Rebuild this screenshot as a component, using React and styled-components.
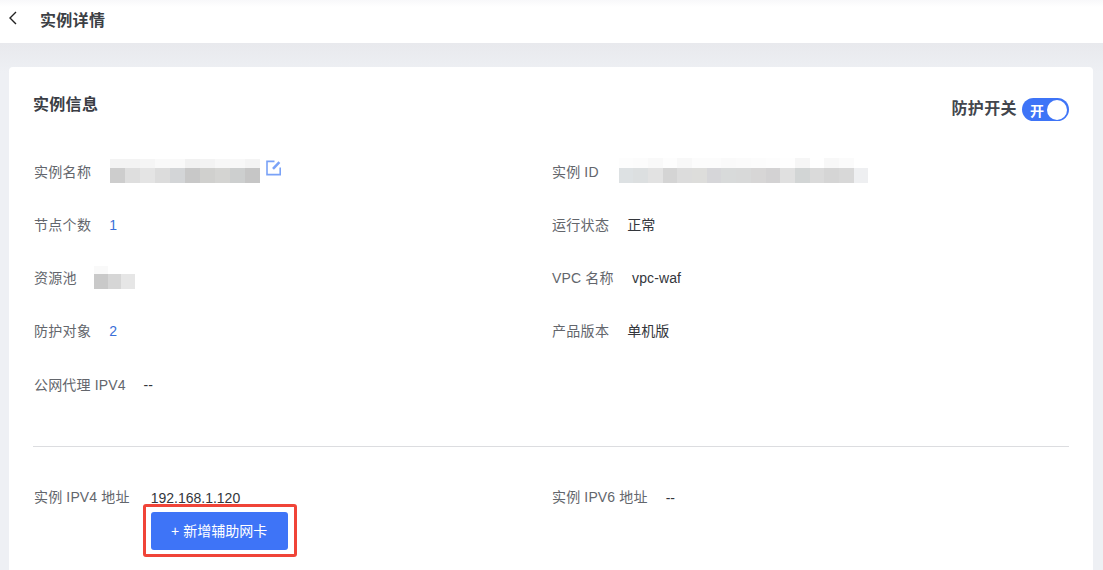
import React from "react";
import styled, { createGlobalStyle } from "styled-components";

const Global = createGlobalStyle`
  html, body { margin: 0; padding: 0; height: 570px; overflow: hidden; background: #eceef3; }
  body { font-family: "Liberation Sans", "Noto Sans CJK SC", sans-serif; font-size: 14px; color: #333; }
  * { box-sizing: border-box; }
`;
const Page = styled.div`display: flex; flex-direction: column; height: 570px; overflow: hidden;`;
const Header = styled.header`
  height: 43px; flex: none; display: flex; align-items: center; padding: 0 0 2px 8px; gap: 22px;
  background: linear-gradient(#f8f8fa 0, #fff 7px);
`;
const Back = styled.svg`width: 10px; height: 14px; flex: none; margin-top: -6px;`;
const PageTitle = styled.h1`margin: 0; font-size: 16px; letter-spacing: .3px; font-weight: 700; color: #3c3f45; line-height: 20px;`;
const Body = styled.main`flex: 1; padding: 24px 10px 0 9px; background: linear-gradient(#e8e9ed, #eef0f4 30px);`;
const Card = styled.section`background: #fff; border-radius: 4px; height: 520px; padding: 0 24px;`;
const CardHead = styled.div`display: flex; justify-content: space-between; align-items: flex-start; height: 77px; padding-top: 28px;`;
const CardTitle = styled.h2`margin: 0; font-size: 16px; letter-spacing: .3px; font-weight: 700; color: #3a3d44; line-height: 20px;`;
const Guard = styled.div`display: flex; align-items: center; gap: 5px; margin-top: 3px;`;
const GuardLabel = styled.span`font-size: 16px; letter-spacing: .4px; font-weight: 700; color: #43464d; line-height: 20px; margin-bottom: 2px;`;
const Switch = styled.span`
  width: 47px; height: 23px; border-radius: 12px; background: #3e74f7; display: flex; align-items: center;
  justify-content: space-between; padding: 0 2px 0 8px; color: #fff; font-size: 14px; font-weight: 700;
`;
const Knob = styled.i`width: 20px; height: 20px; border-radius: 50%; background: #fff; display: block;`;
const Grid = styled.div`display: grid; grid-template-columns: 518px 1fr; grid-auto-rows: 53.25px; padding-left: 1px;`;
const Field = styled.div`display: flex; align-items: center; height: 100%;`;
const Label = styled.span`color: #63666c; letter-spacing: ${p => p.$tight ? ".15px" : ".3px"}; margin-right: ${p => p.$gap || 18}px; white-space: nowrap;`;
const Value = styled.span`
  color: ${p => p.$link ? "#3a6fd8" : "#33363b"}; white-space: nowrap;
  padding-top: ${p => p.$latin ? 2 : 0}px; letter-spacing: ${p => p.$latin ? ".1px" : "0"};
`;
const Mosaic = styled.div`display: flex; flex-direction: column; margin-top: ${p => p.$top || 0}px;`;
const MosaicRow = styled.div`display: flex; height: ${p => p.$h}px;`;
const Pixel = styled.i`display: block; width: ${p => p.$w || 15}px; background: ${p => p.$c};`;
const EditIcon = styled.svg`width: 16px; height: 16px; margin: -5px 0 0 6px; flex: none;`;
const Divider = styled.hr`border: 0; height: 1px; background: #dcdde0; margin: 36px 0 0 0;`;
const Lower = styled.div`display: grid; grid-template-columns: 518px 1fr; padding: 39px 0 0 1px;`;
const LowerField = styled.div`display: flex; align-items: flex-start;`;
const LowerLabel = styled(Label)`line-height: 22px;`;
const Stack = styled.div`display: flex; flex-direction: column; align-items: flex-start;`;
const LowerValue = styled(Value)`line-height: 22px; padding-top: 0; margin-top: 1px;`;
const Mark = styled.div`
  border: 3px solid #f04438; border-radius: 3px; padding: 5px 6px 4px 5px; margin: -5px 0 0 -8px; background: #fff;
`;
const Add = styled.button`
  display: block; width: 137px; height: 38px; border: 0; border-radius: 3px; background: #3e74f7; color: #fff;
  font: inherit; font-size: 14px; padding: 0 0 2px;
`;

const px = (s) => s.split(" ").map((c) => "#" + c);
const name1 = px("f3f3f3 f3f3f3 f5f5f5 f9f9f9 f9f9f9 f1f1f1 f3f3f3 f7f7f7 f8f8f8 f4f4f4");
const name2 = px("cdcdcd dedede e4e4e4 dcdcdc d3d5d7 c8c8c8 d0d0ce d4d4d2 cdcfcf c6c6c6");
const id1 = px("fdfdfd fcfcfc f9f9f9 fdfdfd f8f8f8 fcfcfc fcfcfc fafafa fbfbfb fcfcfc fdfdfd fefefe f6f6f6 ffffff f8f8f8 fbfbfb");
const id2 = px("dde1e3 dcdfe0 e2e2e2 d4d4d4 dcdcdc dddddb d6d6d9 d8dada d8d9d9 d7d6d6 d3d2d3 e0e0e0 d2d5d5 dadada d5d5d5 d8d8d8 eeeff1");

const MosaicBlock = ({ top, bottom, w, h1, h2, mt }) => (
  <Mosaic $top={mt}>
    <MosaicRow $h={h1}>{top.map((c, i) => <Pixel key={i} $c={c} $w={w} />)}</MosaicRow>
    <MosaicRow $h={h2}>{bottom.map((c, i) => <Pixel key={i} $c={c} $w={w} />)}</MosaicRow>
  </Mosaic>
);

export default function App() {
  return (
    <Page>
      <Global />
      <Header>
        <Back viewBox="0 0 10 14" fill="none" stroke="#222" strokeWidth="1.4">
          <path d="M8 1 2 7l6 6" />
        </Back>
        <PageTitle>实例详情</PageTitle>
      </Header>
      <Body>
        <Card>
          <CardHead>
            <CardTitle>实例信息</CardTitle>
            <Guard>
              <GuardLabel>防护开关</GuardLabel>
              <Switch>开<Knob /></Switch>
            </Guard>
          </CardHead>
          <Grid>
            <Field>
              <Label $gap={19}>实例名称</Label>
              <MosaicBlock top={name1} bottom={name2} h1={9} h2={15} mt={1} />
              <EditIcon viewBox="0 0 16 16" fill="none" stroke="#7aa2f7">
                <path d="M8.5 1.4H1v13.2h13.2V7.6" strokeWidth="1.6" />
                <path d="M7 8.9 13.4 2.2" strokeWidth="2.6" />
              </EditIcon>
            </Field>
            <Field>
              <Label $tight $gap={20}>实例 ID</Label>
              <MosaicBlock top={id1} bottom={id2} w={14.7} h1={10} h2={15} />
            </Field>
            <Field><Label>节点个数</Label><Value $link $latin>1</Value></Field>
            <Field><Label>运行状态</Label><Value>正常</Value></Field>
            <Field>
              <Label $gap={17}>资源池</Label>
              <MosaicBlock top={px("f9f9f9 ffffff")} bottom={px("c9c9c9 d6d6d6 e6e6e6")} w={13.67} h1={8} h2={15} />
            </Field>
            <Field><Label $tight $gap={18.5}>VPC 名称</Label><Value $latin>vpc-waf</Value></Field>
            <Field><Label>防护对象</Label><Value $link $latin>2</Value></Field>
            <Field><Label>产品版本</Label><Value>单机版</Value></Field>
            <Field><Label $tight>公网代理 IPV4</Label><Value $latin>--</Value></Field>
          </Grid>
          <Divider />
          <Lower>
            <LowerField>
              <LowerLabel $tight $gap={21}>实例 IPV4 地址</LowerLabel>
              <Stack>
                <LowerValue>192.168.1.120</LowerValue>
                <Mark><Add>+ 新增辅助网卡</Add></Mark>
              </Stack>
            </LowerField>
            <LowerField>
              <LowerLabel $tight $gap={18}>实例 IPV6 地址</LowerLabel>
              <LowerValue>--</LowerValue>
            </LowerField>
          </Lower>
        </Card>
      </Body>
    </Page>
  );
}
